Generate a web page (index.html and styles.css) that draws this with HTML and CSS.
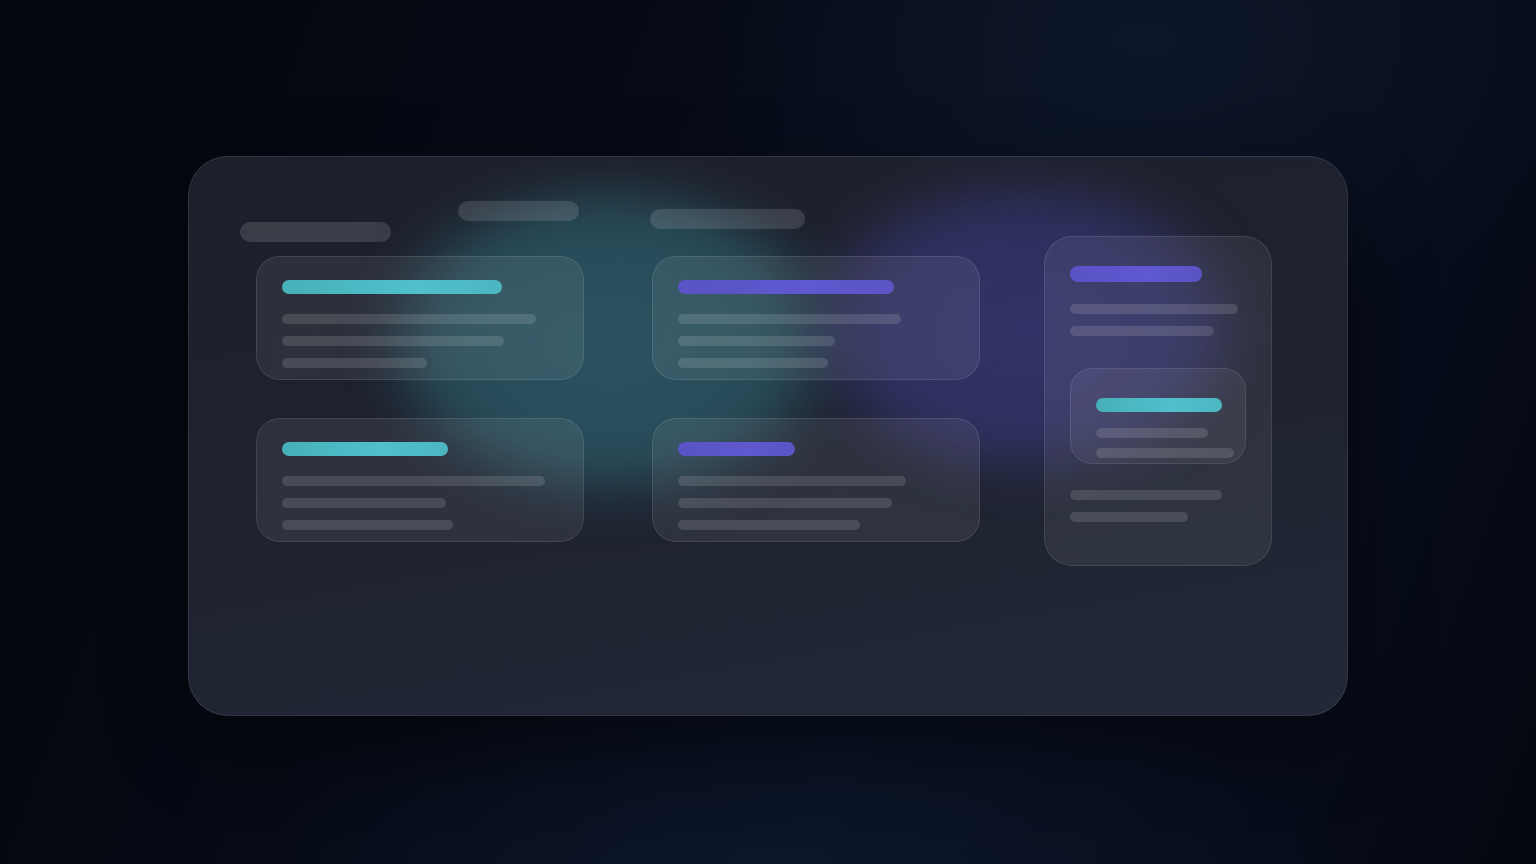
FILE: index.html
```html
<!DOCTYPE html>
<html lang="en">
<head>
<meta charset="utf-8">
<title>Glass board</title>
<link rel="stylesheet" href="styles.css">
</head>
<body>
<main class="panel">
  <div class="glow glow-teal"></div>
  <div class="glow glow-purple"></div>
  <section class="board">
    <header class="board-head">
      <span class="pill pill-a"></span>
      <span class="pill pill-b"></span>
      <span class="pill pill-c"></span>
    </header>
    <div class="grid">
      <article class="card">
        <span class="title teal" style="width:220px"></span>
        <span class="line" style="width:254px"></span>
        <span class="line" style="width:222px"></span>
        <span class="line" style="width:145px"></span>
      </article>
      <article class="card">
        <span class="title purple" style="width:216px"></span>
        <span class="line" style="width:223px"></span>
        <span class="line" style="width:157px"></span>
        <span class="line" style="width:150px"></span>
      </article>
      <article class="card">
        <span class="title teal" style="width:166px"></span>
        <span class="line" style="width:263px"></span>
        <span class="line" style="width:164px"></span>
        <span class="line" style="width:171px"></span>
      </article>
      <article class="card">
        <span class="title purple" style="width:117px"></span>
        <span class="line" style="width:228px"></span>
        <span class="line" style="width:214px"></span>
        <span class="line" style="width:182px"></span>
      </article>
    </div>
  </section>
  <aside class="side">
    <span class="title title-lg purple" style="width:132px"></span>
    <span class="line" style="width:168px"></span>
    <span class="line" style="width:144px"></span>
    <div class="inner">
      <span class="title teal" style="width:126px"></span>
      <span class="line" style="width:112px"></span>
      <span class="line line-tight" style="width:138px"></span>
    </div>
    <span class="line" style="width:152px"></span>
    <span class="line" style="width:118px"></span>
  </aside>
</main>
</body>
</html>
```
FILE: styles.css
```css
* { box-sizing: border-box; }
html, body { height: 100%; }
body {
  margin: 0;
  min-height: 864px;
  padding-top: 156px;
  display: flex;
  justify-content: center;
  align-items: flex-start;
  font-family: "Inter", "Liberation Sans", sans-serif;
  background:
    radial-gradient(ellipse 800px 260px at 760px 880px, rgba(18,30,60,0.45), transparent 75%),
    radial-gradient(ellipse 600px 400px at 1150px 40px, rgba(18,28,52,0.5), transparent 75%),
    linear-gradient(110deg, #04060d 0%, #060a15 35%, #08101f 60%, #070c1a 85%, #04070f 100%);
}
.panel {
  position: relative;
  width: 1160px;
  height: 560px;
  border-radius: 40px;
  border: 1px solid rgba(255,255,255,0.09);
  background: linear-gradient(170deg, #1d202b 0%, #1f2330 55%, #222837 100%);
  overflow: hidden;
  display: flex;
  align-items: flex-start;
  padding: 44px 0 0 51px;
  box-shadow: 0 30px 80px rgba(0,0,0,0.4);
}
.glow {
  position: absolute;
  border-radius: 50%;
  filter: blur(22px);
  pointer-events: none;
}
.glow-teal {
  left: 182px;
  top: 16px;
  width: 476px;
  height: 336px;
  background: radial-gradient(ellipse at center, rgba(54,132,146,0.5) 0%, rgba(52,126,140,0.45) 52%, rgba(45,110,125,0) 71%);
}
.glow-purple {
  left: 608px;
  top: 12px;
  width: 456px;
  height: 316px;
  background: radial-gradient(ellipse at center, rgba(74,70,170,0.46) 0%, rgba(72,68,165,0.4) 52%, rgba(66,60,150,0) 71%);
}
.board {
  position: relative;
  width: 740px;
  display: flex;
  flex-direction: column;
}
.board-head {
  display: flex;
  align-items: flex-start;
  height: 40px;
}
.pill {
  display: block;
  height: 20px;
  border-radius: 10px;
  background: rgba(255,255,255,0.13);
}
.pill-a { width: 151px; margin-top: 21px; }
.pill-b { width: 121px; margin-left: 67px; }
.pill-c { width: 155px; margin-left: 71px; margin-top: 8px; }
.grid {
  margin-top: 15px;
  margin-left: 16px;
  display: grid;
  grid-template-columns: 328px 328px;
  grid-auto-rows: 124px;
  column-gap: 68px;
  row-gap: 38px;
}
.card {
  border-radius: 24px;
  border: 1px solid rgba(255,255,255,0.1);
  background: rgba(255,255,255,0.07);
  backdrop-filter: blur(6px);
  padding: 23px 0 0 25px;
  display: flex;
  flex-direction: column;
  align-items: flex-start;
}
.title {
  display: block;
  height: 14px;
  border-radius: 7px;
  margin-bottom: 20px;
}
.title-lg { height: 16px; border-radius: 8px; margin-bottom: 22px; }
.teal { background: linear-gradient(90deg, #47b0b8, #4fc0cc 60%, #4cb6c1); }
.purple { background: linear-gradient(90deg, #5a53c6, #5f58cf 60%, #5a54c4); }
.line {
  display: block;
  height: 10px;
  border-radius: 5px;
  background: rgba(255,255,255,0.13);
  margin-bottom: 12px;
}
.line:last-child { margin-bottom: 0; }
.side {
  position: relative;
  width: 228px;
  height: 330px;
  margin-left: 64px;
  margin-top: 35px;
  border-radius: 28px;
  border: 1px solid rgba(255,255,255,0.1);
  background: rgba(255,255,255,0.07);
  backdrop-filter: blur(6px);
  padding: 29px 0 0 25px;
  display: flex;
  flex-direction: column;
  align-items: flex-start;
}
.inner {
  width: 176px;
  height: 96px;
  margin-top: 20px;
  margin-bottom: 26px;
  border-radius: 22px;
  border: 1px solid rgba(255,255,255,0.09);
  background: rgba(255,255,255,0.06);
  padding: 29px 0 0 25px;
  display: flex;
  flex-direction: column;
  align-items: flex-start;
}
.inner .title { margin-bottom: 16px; }
.inner .line-tight { margin-top: -2px; }
```
